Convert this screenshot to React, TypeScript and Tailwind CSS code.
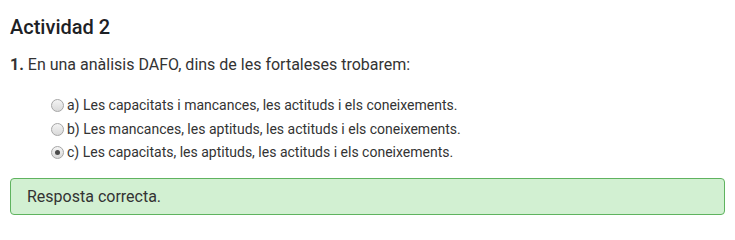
const OPTIONS = [
  { key: 'a', text: 'a) Les capacitats i mancances, les actituds i els coneixements.' },
  { key: 'b', text: 'b) Les mancances, les aptituds, les actituds i els coneixements.' },
  { key: 'c', text: 'c) Les capacitats, les aptituds, les actituds i els coneixements.' },
]

const SELECTED = 'c'

function Radio({ checked }: { checked: boolean }) {
  return (
    <span className="flex h-[13px] w-[13px] shrink-0 items-center justify-center rounded-full border border-[#a6a6a6] bg-gradient-to-b from-[#f4f4f4] to-[#d9d9d9]">
      {checked && <span className="h-[5px] w-[5px] rounded-full bg-[#4a4a4a]" />}
    </span>
  )
}

export default function App() {
  return (
    <div
      className="min-h-[231px] bg-white px-[10px] pt-[15px] text-[#333333]"
      style={{ fontFamily: 'Roboto, "Liberation Sans", sans-serif' }}
    >
      <h3 className="text-[20px] font-medium leading-[24px] text-[#1d2125]">Actividad 2</h3>

      <p className="mt-[14px] text-[16px] leading-[24px]">
        <b className="font-bold">1.</b> En una anàlisis DAFO, dins de les fortaleses trobarem:
      </p>

      <div className="mt-[17px] pl-[41px]">
        {OPTIONS.map((o) => (
          <label key={o.key} className="flex h-[23.4px] items-center gap-[3px] text-[14px]">
            <Radio checked={o.key === SELECTED} />
            <span>{o.text}</span>
          </label>
        ))}
      </div>

      <div className="mt-[14px] rounded-[4px] border border-[#5fb35f] bg-[#d2f0d2] px-4 py-[6px] text-[16px] leading-[23px]">
        Resposta correcta.
      </div>
    </div>
  )
}
